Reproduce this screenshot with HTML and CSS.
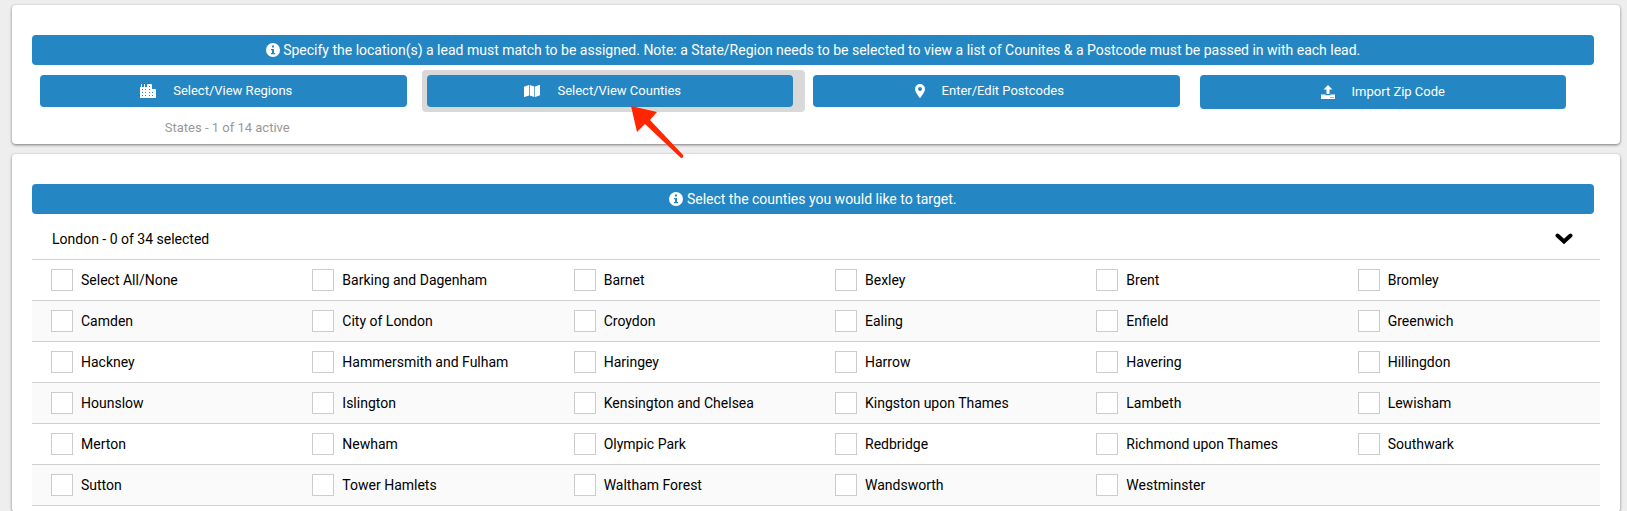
FILE: index.html
```html
<!DOCTYPE html>
<html lang="en">
<head>
    <meta charset="UTF-8">
    <meta name="viewport" content="width=device-width, initial-scale=1.0">
    <link rel="stylesheet" href="styles.css">
    <title>Locations</title>
</head>
<body>
    <section class="card">
        <p class="banner">
            <svg class="info" viewBox="0 0 14 14"><circle cx="7" cy="7" r="7" fill="#fff"/><path d="M5 6h3v4h1v1.300H5V10h1V7.200H5zM6 2.600h2v2H6z" fill="#2487c4"/></svg>
            Specify the location(s) a lead must match to be assigned. Note: a State/Region needs to be selected to view a list of Counites &amp; a Postcode must be passed in with each lead.
        </p>
        <div class="actions">
            <div class="action">
                <button class="btn" type="button">
                    <svg width="16" height="14" viewBox="0 0 16 14"><path fill="#fff" fill-rule="evenodd" d="M0 3h1V0h1v3h2V0h1v3h2V1q0-1 1-1h3q1 0 1 1v4h3q1 0 1 1v8H0zM2 5v1h1V5zm3 0v1h1V5zM2 8v1h1V8zm3 0v1h1V8zm-3 3v1h1v-1zm3 0v1h1v-1zM9 2v1h1V2zm0 3v1h1V5zm0 3v1h1V8zm0 3v1h1v-1zm3-3v1h1V8zm0 3v1h1v-1z"/></svg>
                    <span>Select/View Regions</span>
                </button>
                <span class="count">States - 1 of 14 active</span>
            </div>
            <div class="action active">
                <button class="btn" type="button">
                    <svg width="16" height="14" viewBox="0 0 16 14"><path fill="#fff" d="M0 3.300Q0 2.600.6 2.400L5 1v10.400L.6 13Q0 13.200 0 12.600zM5.700 1l4.600 1.600V13l-4.600-1.600zM11 2.600L15.400 1q.6-.2.6.4v9.300q0 .6-.6.9L11 13z"/></svg>
                    <span>Select/View Counties</span>
                </button>
                <svg class="arrow" width="54" height="54" viewBox="0 0 54 54"><path fill="#ff2600" d="M0 0l26 6-7 8 33 35q1 3-2 3L14 18l-8 8z"/></svg>
            </div>
            <div class="action">
                <button class="btn" type="button">
                    <svg width="10" height="14" viewBox="0 0 10 14"><path fill="#fff" fill-rule="evenodd" d="M5 0a5 5 0 0 1 5 5c0 2.400-1.600 4-4.300 8.600q-.7.800-1.400 0C1.600 9 0 7.400 0 5a5 5 0 0 1 5-5zm0 3a2 2 0 1 0 0 4 2 2 0 0 0 0-4z"/></svg>
                    <span>Enter/Edit Postcodes</span>
                </button>
            </div>
            <div class="action">
                <button class="btn tall" type="button">
                    <svg width="14" height="14" viewBox="0 0 14 14"><path fill="#fff" fill-rule="evenodd" d="M7 0l4.500 4.500H8.500V9h-3V4.500h-3zM0 9.500h4.500v.800h5v-.8H14V14H0zm9.500 2.500v1h1v-1zm2 0v1h1v-1z"/></svg>
                    <span>Import Zip Code</span>
                </button>
            </div>
        </div>
    </section>

    <section class="card">
        <p class="banner">
            <svg class="info" viewBox="0 0 14 14"><circle cx="7" cy="7" r="7" fill="#fff"/><path d="M5 6h3v4h1v1.300H5V10h1V7.200H5zM6 2.600h2v2H6z" fill="#2487c4"/></svg>
            Select the counties you would like to target.
        </p>
        <button class="region" type="button">
            London - 0 of 34 selected
            <svg width="18" height="12" viewBox="0 0 18 12"><path d="M2.500 2.500L9 8.500l6.500-6" fill="none" stroke="#000" stroke-width="4" stroke-linecap="round"/></svg>
        </button>
        <div class="counties">
            <div class="row">
                <label><input type="checkbox">Select All/None</label>
                <label><input type="checkbox">Barking and Dagenham</label>
                <label><input type="checkbox">Barnet</label>
                <label><input type="checkbox">Bexley</label>
                <label><input type="checkbox">Brent</label>
                <label><input type="checkbox">Bromley</label>
            </div>
            <div class="row">
                <label><input type="checkbox">Camden</label>
                <label><input type="checkbox">City of London</label>
                <label><input type="checkbox">Croydon</label>
                <label><input type="checkbox">Ealing</label>
                <label><input type="checkbox">Enfield</label>
                <label><input type="checkbox">Greenwich</label>
            </div>
            <div class="row">
                <label><input type="checkbox">Hackney</label>
                <label><input type="checkbox">Hammersmith and Fulham</label>
                <label><input type="checkbox">Haringey</label>
                <label><input type="checkbox">Harrow</label>
                <label><input type="checkbox">Havering</label>
                <label><input type="checkbox">Hillingdon</label>
            </div>
            <div class="row">
                <label><input type="checkbox">Hounslow</label>
                <label><input type="checkbox">Islington</label>
                <label><input type="checkbox">Kensington and Chelsea</label>
                <label><input type="checkbox">Kingston upon Thames</label>
                <label><input type="checkbox">Lambeth</label>
                <label><input type="checkbox">Lewisham</label>
            </div>
            <div class="row">
                <label><input type="checkbox">Merton</label>
                <label><input type="checkbox">Newham</label>
                <label><input type="checkbox">Olympic Park</label>
                <label><input type="checkbox">Redbridge</label>
                <label><input type="checkbox">Richmond upon Thames</label>
                <label><input type="checkbox">Southwark</label>
            </div>
            <div class="row">
                <label><input type="checkbox">Sutton</label>
                <label><input type="checkbox">Tower Hamlets</label>
                <label><input type="checkbox">Waltham Forest</label>
                <label><input type="checkbox">Wandsworth</label>
                <label><input type="checkbox">Westminster</label>
            </div>
        </div>
    </section>
</body>
</html>
```
FILE: styles.css
```css
* {
    box-sizing: border-box;
}

body {
    margin: 0;
    padding: 5px 7px 0 12px;
    height: 100vh;
    overflow: hidden;
    background: #eee;
    color: #000;
    font-family: Roboto, sans-serif;
    font-size: 14px;
    line-height: 20px;
}

button {
    border: none;
    font: inherit;
    cursor: pointer;
}

.card {
    margin-bottom: 10px;
    padding: 30px 20px 6px;
    background: #fff;
    border-radius: 4px;
    box-shadow: 0 1px 3px rgba(0, 0, 0, 0.5);
}

.banner {
    margin: 0 6px 0 0;
    padding: 5px;
    background: #2487c4;
    color: #fff;
    border-radius: 4px;
    text-align: center;
}

.info {
    width: 14px;
    height: 14px;
    vertical-align: -2px;
}

.actions {
    display: grid;
    grid-template-columns: repeat(4, 1fr);
    align-items: start;
    gap: 20px;
    margin: 10px 34px 0 8px;
}

.action {
    position: relative;
    display: flex;
    flex-direction: column;
}

.btn {
    display: flex;
    align-items: center;
    justify-content: center;
    gap: 17px;
    height: 32px;
    padding: 0 14px 0 0;
    background: #2487c4;
    color: #fff;
    border-radius: 4px;
    font-size: 13px;
}

.tall {
    height: 34px;
    padding: 0;
}

.active {
    margin: -5px -12px 0 -5px;
    padding: 5px 12px 5px 5px;
    background: #d9d9d9;
    border-radius: 4px;
}

.count {
    margin-top: 11px;
    padding-left: 8px;
    color: #999;
    font-size: 13px;
    text-align: center;
}

/* pointer drawn over the selected button */
.arrow {
    position: absolute;
    top: 36px;
    left: 209px;
}

.region {
    display: flex;
    align-items: center;
    justify-content: space-between;
    width: 100%;
    padding: 15px 27px 10px 20px;
    background: none;
    color: #000;
}

.row {
    display: grid;
    grid-template-columns: repeat(6, 1fr);
    height: 41px;
    border-top: 1px solid #d0d0d0;
}

.row:nth-child(even) {
    background: #fafafa;
}

.row:last-child {
    height: 42px;
    border-bottom: 1px solid #d0d0d0;
}

.row label {
    display: flex;
    align-items: center;
    gap: 8px;
    padding-left: 19px;
}

.row input {
    appearance: none;
    width: 22px;
    height: 22px;
    margin: 0;
    background: #fff;
    border: 1px solid #ccc;
}
```
